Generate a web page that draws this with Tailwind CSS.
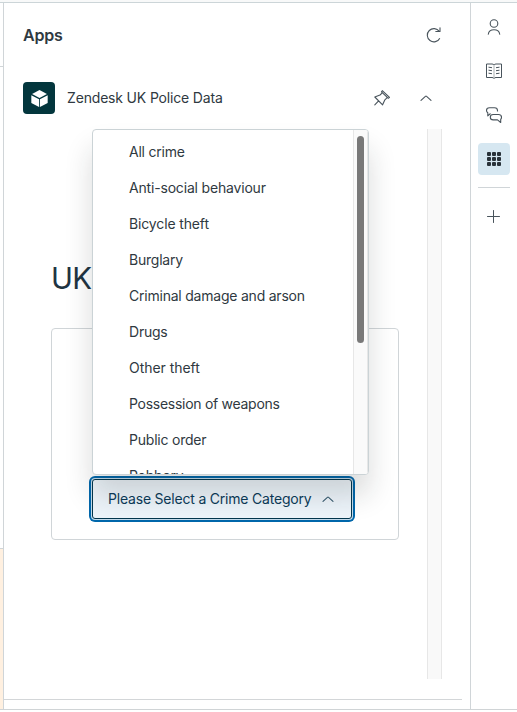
<!DOCTYPE html>
<html lang="en">
<head>
<meta charset="utf-8">
<title>Apps</title>
<script src="https://cdn.jsdelivr.net/npm/@tailwindcss/browser@4"></script>
</head>
<body class="h-[712px] w-[517px] overflow-hidden bg-white font-['Inter',sans-serif] text-sm text-[#2f3941]">
<div class="flex h-[710px] flex-col border-b border-[#d0d4d6]">
  <div class="h-[3px] shrink-0 border-b border-[#ccd5d8] bg-[#f8f9f9]"></div>
  <div class="flex min-h-0 flex-1">
    <div class="flex w-1 shrink-0 flex-col border-r border-[#d0d5d8]">
      <div class="h-16 border-b border-[#d0d5d8]"></div>
      <div class="h-[482px] border-b border-[#d0d5d8]"></div>
      <div class="flex-1 bg-[#fff0e0]"></div>
    </div>
    <main class="flex w-[466px] shrink-0 flex-col">
      <header class="flex h-16 items-center justify-between pr-[28px] pl-[19px]">
        <h1 class="text-base font-semibold tracking-[-0.2px]">Apps</h1>
        <svg class="size-4" viewBox="0 0 16 16" fill="none" stroke="#49545c" stroke-width="1.1"><path d="M13.8 11.2A6.6 6.6 0 1 1 13.3 4.4"/><path d="M14 .8V4.500H9.800" stroke-linejoin="round" stroke-linecap="round"/></svg>
      </header>
      <section class="flex h-[62px] items-center pr-[38px] pl-[19px]">
        <div class="flex size-8 items-center justify-center rounded bg-[#03363d]">
          <svg class="size-[17px]" viewBox="0 0 16 16" fill="#fff"><path d="M8 0 15 3.800 8 7.600 1 3.800Z"/><path d="M.300 5 7.600 8.800V16L.300 12.300ZM15.700 5 8.400 8.800V16l7.300-3.700Z"/></svg>
        </div>
        <h2 class="ml-3 flex-1 tracking-[-0.17px] whitespace-nowrap">Zendesk UK Police Data</h2>
        <svg class="mr-[30px] size-4" viewBox="0 0 16 16" fill="none" stroke="#49545c" stroke-width="1.1" stroke-linejoin="round" stroke-linecap="round"><path d="M8.300.7 15.500 7.300 14.300 8.300 7.500 1.900ZM8 3.200 6 5 .8 7 8.600 14.800 10.900 9.800 12.900 7.900M4.600 10.900.8 14.800"/></svg>
        <svg class="h-4 w-3" viewBox="0 0 12 16" fill="none" stroke="#49545c" stroke-width="1.1" stroke-linecap="round"><path d="m1 10.300 4.400-4q.6-.5 1.200 0l4.400 4"/></svg>
      </section>
      <div class="flex h-[550px]">
        <div class="relative w-[423px] pt-[129px] pl-[47px]">
          <div class="h-[70px] text-[29.500px] leading-[41px] tracking-[-0.8px] text-[#1f3442]">UK</div>
          <div class="flex h-[212px] w-[348px] items-end rounded border border-[#d0d5d8] pb-[19px] pl-[40px]">
            <button class="mb-px flex h-10 w-[260px] items-center rounded-[3px] border border-[#03364d] bg-[#edf4fa] pl-[15px] text-[#0b3b59] shadow-[0_0_0_1px_#c5dcec,0_0_0_3px_#0067ab]">
              <span class="tracking-[-0.2px] whitespace-nowrap">Please Select a Crime Category</span>
              <svg class="ml-[10px] h-4 w-3" viewBox="0 0 12 16" fill="none" stroke="#35596e" stroke-width="1.1" stroke-linecap="round"><path d="m1 10.300 4.400-4q.6-.5 1.200 0l4.400 4"/></svg>
            </button>
          </div>
          <div class="absolute top-0 left-[88px] flex h-[346px] w-[277px] overflow-hidden rounded border border-[#cbd3d6] bg-white shadow-[0_20px_28px_0_rgba(23,28,31,0.16)]">
            <ul class="flex-1 pt-1 pl-9 leading-9 tracking-[-0.22px] whitespace-nowrap">
              <li class="h-9">All crime</li>
              <li class="h-9 tracking-[-0.18px]">Anti-social behaviour</li>
              <li class="h-9 tracking-[-0.14px]">Bicycle theft</li>
              <li class="h-9">Burglary</li>
              <li class="h-9">Criminal damage and arson</li>
              <li class="h-9">Drugs</li>
              <li class="h-9 tracking-[-0.05px]">Other theft</li>
              <li class="h-9 tracking-[-0.28px]">Possession of weapons</li>
              <li class="h-9">Public order</li>
              <li class="h-9">Robbery</li>
            </ul>
            <div class="w-[15px] border-x border-[#e7e7e7] bg-[#fafafa] px-[3px] pt-1.5">
              <div class="h-[207px] w-[7px] rounded-full bg-[#797979]"></div>
            </div>
          </div>
        </div>
        <div class="w-[15px] border-x border-[#e7e7e7] bg-[#f9f9f9]"></div>
      </div>
      <div class="mt-5 w-[458px] border-t border-[#d3d6d8]"></div>
    </main>
    <nav class="flex flex-1 flex-col items-center border-l border-[#d0d5d8] pt-2">
      <div class="flex size-8 items-center justify-center"><svg class="size-4" viewBox="0 0 16 16" fill="none" stroke="#49545c" stroke-width="1.1" stroke-linecap="round"><circle cx="8" cy="4.500" r="3.800"/><path d="M2.300 15.300C3 9.200 13 9.200 13.700 15.300"/></svg></div>
      <div class="mt-3 flex size-8 items-center justify-center"><svg class="size-4" viewBox="0 0 16 16" fill="none" stroke="#49545c"><path d="M8 2Q7.500 1 6 1H.5v13.500H6q1.500 0 2 1 .5-1 2-1h5.500V1H10Q8.500 1 8 2Z"/><path d="M8 2v13.500" stroke-opacity=".45"/><path d="M2.500 4.200l3.500.5M2.500 7.200l3.500.5M2.500 10.200l3.500.5M13.500 4.200l-3.500.5M13.500 7.200l-3.500.5M13.500 10.200l-3.500.5"/></svg></div>
      <div class="mt-3 flex size-8 items-center justify-center"><svg class="size-4" viewBox="0 0 16 16" fill="none" stroke="#49545c" stroke-width="1.1" stroke-linejoin="round"><path d="M4.500 6.500 1.800 8.800V5.800Q.5 5 .5 3.500 .5.700 3.500.700H8.500Q11.500.700 11.500 3.500V4.500"/><path d="M7.200 7.500H12.500Q15.500 7.500 15.500 10.200 15.500 11.700 14.700 12.300V15.500L11.500 12.900H7.200Q4.300 12.900 4.300 10.200 4.300 7.500 7.200 7.500Z"/></svg></div>
      <div class="mt-3 flex size-8 items-center justify-center rounded bg-[#d6e7f1]"><svg class="size-4" viewBox="0 0 16 16" fill="#293239"><rect x="1" y="1" width="4" height="4" rx="1"/><rect x="6" y="1" width="4" height="4" rx="1"/><rect x="11" y="1" width="4" height="4" rx="1"/><rect x="1" y="6" width="4" height="4" rx="1"/><rect x="6" y="6" width="4" height="4" rx="1"/><rect x="11" y="6" width="4" height="4" rx="1"/><rect x="1" y="11" width="4" height="4" rx="1"/><rect x="6" y="11" width="4" height="4" rx="1"/><rect x="11" y="11" width="4" height="4" rx="1"/></svg></div>
      <div class="mt-3 w-8 border-t border-[#d0d5d8]"></div>
      <div class="mt-3 flex size-8 items-center justify-center"><svg class="size-4" viewBox="0 0 16 16" stroke="#49545c" stroke-linecap="round"><path d="M7.500 2.500v12M1.500 8.500h12"/></svg></div>
    </nav>
  </div>
</div>
</body>
</html>
